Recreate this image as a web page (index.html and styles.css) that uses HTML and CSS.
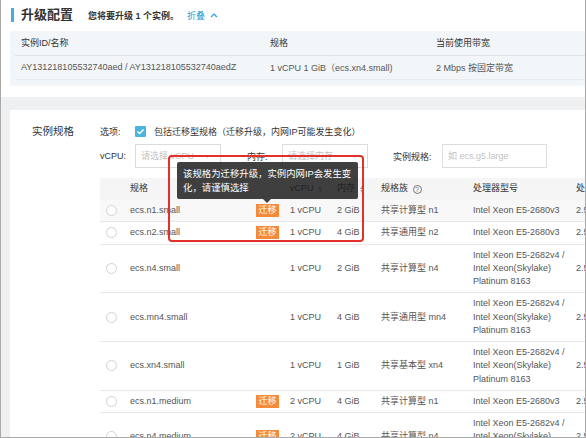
FILE: index.html
```html
<!DOCTYPE html>
<html lang="zh-CN">
<head>
    <meta charset="UTF-8">
    <title>升级配置</title>
    <link rel="stylesheet" href="styles.css">
</head>
<body>
    <div class="frame">
        <section class="summary">
            <div class="summary-head">
                <h2 class="title">升级配置</h2>
                <span class="subtitle">您将要升级 1 个实例。</span>
                <a class="fold" href="#">折叠
                    <svg width="8" height="6" viewBox="0 0 8 6"><polyline points="1,5 4,2 7,5" fill="none" stroke="#2a9fd6" stroke-width="1.2"/></svg>
                </a>
            </div>
            <div class="summary-box">
                <table class="info">
                    <colgroup>
                        <col style="width:249px"><col style="width:166px"><col>
                    </colgroup>
                    <thead>
                        <tr><th>实例ID/名称</th><th>规格</th><th>当前使用带宽</th></tr>
                    </thead>
                    <tbody>
                        <tr>
                            <td>AY131218105532740aed / AY131218105532740aedZ</td>
                            <td>1 vCPU 1 GiB（ecs.xn4.small)</td>
                            <td>2 Mbps 按固定带宽</td>
                        </tr>
                    </tbody>
                </table>
            </div>
        </section>

        <section class="spec">
            <div class="spec-label">实例规格</div>
            <div class="spec-body">
                <div class="opt-row">
                    <span class="field-label">选项:</span>
                    <span class="checkbox">
                        <svg width="11" height="11" viewBox="0 0 11 11"><polyline points="2.5,5.6 4.6,7.6 8.6,3.4" fill="none" stroke="#fff" stroke-width="1.4"/></svg>
                    </span>
                    <span class="opt-text">包括迁移型规格（迁移升级，内网IP可能发生变化）</span>
                </div>
                <div class="filter-row">
                    <span class="field-label">vCPU:</span>
                    <div class="select">请选择 vCPU
                        <svg class="caret" width="7" height="5" viewBox="0 0 7 5"><polyline points="1,1 3.5,3.5 6,1" fill="none" stroke="#bbb" stroke-width="1"/></svg>
                    </div>
                    <span class="field-label gap">内存:</span>
                    <div class="select">请选择内存
                        <svg class="caret" width="7" height="5" viewBox="0 0 7 5"><polyline points="1,1 3.5,3.5 6,1" fill="none" stroke="#bbb" stroke-width="1"/></svg>
                    </div>
                    <span class="field-label gap wide">实例规格:</span>
                    <div class="input">如 ecs.g5.large</div>
                </div>

                <div class="table-wrap">
                    <table class="specs">
                        <colgroup>
                            <col style="width:24px"><col style="width:126px"><col style="width:34px"><col style="width:47px">
                            <col style="width:44px"><col style="width:92px"><col style="width:103px"><col style="width:50px">
                        </colgroup>
                        <thead>
                            <tr>
                                <th></th>
                                <th>规格</th>
                                <th></th>
                                <th>vCPU <span class="sort"><i class="up"></i><i class="down"></i></span></th>
                                <th>内存 <span class="sort"><i class="up"></i><i class="down"></i></span></th>
                                <th>规格族 <span class="help">?</span></th>
                                <th>处理器型号</th>
                                <th>处理器主频</th>
                            </tr>
                        </thead>
                        <tbody>
                            <tr class="hover">
                                <td><span class="radio"></span></td>
                                <td>ecs.n1.small</td>
                                <td><span class="tag">迁移</span></td>
                                <td>1 vCPU</td><td>2 GiB</td><td>共享计算型 n1</td>
                                <td>Intel Xeon E5-2680v3</td><td>2.5 GHz</td>
                            </tr>
                            <tr>
                                <td><span class="radio"></span></td>
                                <td>ecs.n2.small</td>
                                <td><span class="tag">迁移</span></td>
                                <td>1 vCPU</td><td>4 GiB</td><td>共享通用型 n2</td>
                                <td>Intel Xeon E5-2680v3</td><td>2.5 GHz</td>
                            </tr>
                            <tr>
                                <td><span class="radio"></span></td>
                                <td>ecs.n4.small</td>
                                <td></td>
                                <td>1 vCPU</td><td>2 GiB</td><td>共享计算型 n4</td>
                                <td>Intel Xeon E5-2682v4 /<br>Intel Xeon(Skylake)<br>Platinum 8163</td><td>2.5 GHz</td>
                            </tr>
                            <tr>
                                <td><span class="radio"></span></td>
                                <td>ecs.mn4.small</td>
                                <td></td>
                                <td>1 vCPU</td><td>4 GiB</td><td>共享通用型 mn4</td>
                                <td>Intel Xeon E5-2682v4 /<br>Intel Xeon(Skylake)<br>Platinum 8163</td><td>2.5 GHz</td>
                            </tr>
                            <tr>
                                <td><span class="radio"></span></td>
                                <td>ecs.xn4.small</td>
                                <td></td>
                                <td>1 vCPU</td><td>1 GiB</td><td>共享基本型 xn4</td>
                                <td>Intel Xeon E5-2682v4 /<br>Intel Xeon(Skylake)<br>Platinum 8163</td><td>2.5 GHz</td>
                            </tr>
                            <tr>
                                <td><span class="radio"></span></td>
                                <td>ecs.n1.medium</td>
                                <td><span class="tag">迁移</span></td>
                                <td>2 vCPU</td><td>4 GiB</td><td>共享计算型 n1</td>
                                <td>Intel Xeon E5-2680v3</td><td>2.5 GHz</td>
                            </tr>
                            <tr>
                                <td><span class="radio"></span></td>
                                <td>ecs.n4.medium</td>
                                <td><span class="tag">迁移</span></td>
                                <td>2 vCPU</td><td>4 GiB</td><td>共享计算型 n4</td>
                                <td>Intel Xeon E5-2682v4 /<br>Intel Xeon(Skylake)<br>Platinum 8163</td><td>2.5 GHz</td>
                            </tr>
                        </tbody>
                    </table>

                    <div class="highlight"></div>
                    <div class="tip">该规格为迁移升级，实例内网IP会发生变化，请谨慎选择</div>
                </div>
            </div>
        </section>
    </div>
</body>
</html>
```

FILE: styles.css
```css
* {
    margin: 0;
    padding: 0;
    box-sizing: border-box;
}

body {
    width: 586px;
    height: 438px;
    overflow: hidden;
    font-family: "Liberation Sans", "Noto Sans CJK SC", sans-serif;
    font-size: 9px;
    color: #555;
    background: #fff;
}

.frame {
    width: 586px;
    height: 438px;
    overflow: hidden;
    background: #eff0f2;
    border: 1px solid #a9a9a9;
    border-top: none;
}

/* top card */
.summary {
    background: #fff;
    padding: 8px 0 10px;
    height: 97px;
}

.summary-head {
    display: flex;
    align-items: center;
    height: 14px;
    border-left: 3px solid #45ade0;
    margin-left: 10px;
    padding-left: 7px;
}

.title {
    font-size: 13px;
    font-weight: bold;
    color: #333;
    line-height: 14px;
    margin-right: 15px;
}

.subtitle {
    font-weight: bold;
    color: #333;
    margin-right: 8px;
}

.fold {
    color: #2a9fd6;
    text-decoration: none;
    display: flex;
    align-items: center;
    gap: 5px;
}

.summary-box {
    margin: 9px 0 0 9px;
    padding: 0 0 6px 5px;
    background: #f3f6f9;
}

.info {
    width: 100%;
    border-collapse: collapse;
    table-layout: fixed;
}

.info th,
.info td {
    text-align: left;
    padding: 0 6px;
    height: 24px;
    white-space: nowrap;
}

.info th {
    font-weight: normal;
    color: #333;
    border-bottom: 1px solid #dde0e4;
}

.info td {
    border-bottom: 1px solid #e9ecef;
}

/* spec card */
.spec {
    display: flex;
    margin: 13px 0 0 9px;
    background: #fff;
    padding-top: 14px;
    height: 400px;
}

.spec-label {
    width: 90px;
    flex-shrink: 0;
    padding-left: 22px;
    font-size: 10.5px;
    line-height: 14px;
    color: #333;
}

.spec-body {
    min-width: 0;
    flex: 1;
}

.opt-row {
    display: flex;
    align-items: center;
    height: 14px;
    color: #333;
}

.field-label {
    width: 35px;
    color: #333;
}

.field-label.gap {
    margin-left: 26px;
}

.field-label.wide {
    margin-left: 25px;
    width: 49px;
}

.checkbox {
    width: 11px;
    height: 11px;
    background: #4bb3e2;
    border-radius: 1px;
    display: flex;
    margin-right: 8px;
}

.filter-row {
    display: flex;
    align-items: center;
    margin-top: 6px;
    height: 24px;
}

.select,
.input {
    position: relative;
    height: 24px;
    border: 1px solid #dcdcdc;
    color: #c2c2c2;
    padding-left: 5px;
    line-height: 22px;
    width: 86px;
    white-space: nowrap;
}

.input {
    width: 105px;
}

.caret {
    position: absolute;
    right: 9px;
    top: 9px;
}

/* table */
.table-wrap {
    position: relative;
    margin-top: 10px;
    width: 520px;
}

.specs {
    width: 520px;
    border-collapse: collapse;
    table-layout: fixed;
}

.specs th,
.specs td {
    text-align: left;
    padding: 4px 0 4px 6px;
    line-height: 13.25px;
    white-space: nowrap;
    vertical-align: middle;
}

.specs th {
    background: #f5f5f5;
    font-weight: normal;
    color: #333;
    height: 22px;
    padding-top: 0;
    padding-bottom: 0;
}

.specs td {
    border-bottom: 1px solid #e8e8e8;
}

.specs tr.hover td {
    background: #f8f8f8;
}

.radio {
    display: block;
    width: 11px;
    height: 11px;
    border: 1px solid #d2d2d2;
    border-radius: 50%;
    background: #fff;
}

.tag {
    display: inline-block;
    background: #f38b3a;
    color: #fff;
    width: 23px;
    height: 13px;
    line-height: 13px;
    text-align: center;
}

.sort {
    display: inline-flex;
    flex-direction: column;
    gap: 1px;
    vertical-align: middle;
    margin-left: 2px;
}

.sort i {
    display: block;
    width: 0;
    height: 0;
    border-left: 2.5px solid transparent;
    border-right: 2.5px solid transparent;
}

.sort .up {
    border-bottom: 3px solid #7d9cc4;
}

.sort .down {
    border-top: 3px solid #a9b3c0;
}

.help {
    display: inline-block;
    width: 9px;
    height: 9px;
    border: 1px solid #777;
    border-radius: 50%;
    font-size: 6.5px;
    line-height: 7px;
    text-align: center;
    color: #777;
    vertical-align: middle;
    margin-left: 2px;
}

/* callout drawn over the table */
.highlight {
    position: absolute;
    left: 68px;
    top: -23px;
    width: 196px;
    height: 87px;
    border: 2px solid #e2302b;
    border-radius: 4px;
}

.tip {
    position: absolute;
    left: 77px;
    top: -16px;
    width: 181px;
    height: 37px;
    padding: 5px 2px 5px 6px;
    background: rgba(30, 30, 30, 0.85);
    color: #fff;
    font-size: 9.4px;
    line-height: 14px;
    border-radius: 2px;
}

.tip::after {
    content: "";
    position: absolute;
    left: 86px;
    bottom: -4px;
    border-left: 4px solid transparent;
    border-right: 4px solid transparent;
    border-top: 4px solid rgba(30, 30, 30, 0.85);
}
```
